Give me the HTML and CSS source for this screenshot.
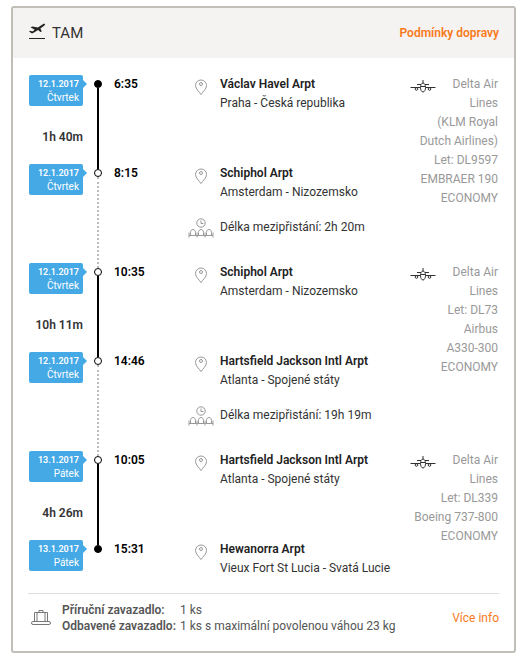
FILE: index.html
```html
<!DOCTYPE html>
<html lang="cs">

<head>
  <meta charset="UTF-8">
  <meta name="viewport" content="width=device-width, initial-scale=1.0">
  <title>TAM</title>
  <link rel="stylesheet" href="styles.css">
</head>

<body>
  <svg class="sprite" width="0" height="0" aria-hidden="true">
    <symbol id="pin" viewBox="0 0 14 17">
      <path d="M7 15.500C5 12.500 1.500 10 1.500 6.500a5.500 5.500 0 0 1 11 0C12.500 10 9 12.500 7 15.500z" />
      <circle cx="7" cy="5" r="1.500" />
    </symbol>
    <symbol id="plane" viewBox="0 0 26 14">
      <path d="M13 1v3M7 5.500h4M15 5.500h4M0.500 8.500h10M15.500 8.500h10" />
      <path d="M13 4c-1.500 0-2.500 2-2.500 4.500S11.500 13 13 13s2.500-2 2.500-4.500S14.500 4 13 4z" />
      <path d="M11 7.500h4" />
      <circle cx="6.500" cy="10" r="1.300" />
      <circle cx="19.500" cy="10" r="1.300" />
    </symbol>
    <symbol id="wait" viewBox="0 0 26 20">
      <circle cx="13" cy="5" r="4.200" />
      <path d="M13 2.500V5.500h2.500" />
      <path d="M1 19.500v-5M9 19.500v-5M17 19.500v-5M25 19.500v-5M1 17.500h24" />
      <path d="M2.500 17.500V14.500c0-4 5-4 5 0v3M10.500 17.500V14.500c0-4 5-4 5 0v3M18.500 17.500V14.500c0-4 5-4 5 0v3" />
    </symbol>
  </svg>

  <section class="card">
    <header class="card-header">
      <svg class="icon-takeoff" width="18" height="18" viewBox="0 0 18 18" aria-hidden="true">
        <path d="M1 16.500h16" />
        <path class="fill" d="M1 9.500l1.300-.8 2 .9 2.500-1.900L2.500 5.300l1.900-.7 5.500 1L14 2.800c1-.8 2.300-1.500 2.900-1s-.2 1.500-1.200 2.200l-3.300 2.600 1.400 2.900-1.400.6-2.300-2-4.500 2.700c-1 .6-1.800.7-2.400.3z" />
      </svg>
      <h1>TAM</h1>
      <a href="#podminky">Podmínky dopravy</a>
    </header>

    <div class="legs">
      <div class="leg">
        <div class="route">
          <div class="when">
            <p class="date"><b>12.1.2017</b><br>Čtvrtek</p>
            <p class="duration">1h 40m</p>
          </div>
          <div class="axis"><i class="dot full"></i><i class="line"></i></div>
          <b class="time">6:35</b>
          <svg class="icon pin" width="14" height="17"><use href="#pin" /></svg>
          <p class="place"><b>Václav Havel Arpt</b><br>Praha - Česká republika</p>

          <div class="when">
            <p class="date"><b>12.1.2017</b><br>Čtvrtek</p>
          </div>
          <div class="axis transfer"><i class="dot"></i><i class="line dotted"></i></div>
          <b class="time">8:15</b>
          <svg class="icon pin" width="14" height="17"><use href="#pin" /></svg>
          <p class="place"><b>Schiphol Arpt</b><br>Amsterdam - Nizozemsko</p>

          <svg class="icon wait" width="26" height="20"><use href="#wait" /></svg>
          <p class="layover">Délka mezipřistání: 2h 20m</p>
        </div>
        <div class="carrier">
          <svg class="plane" width="26" height="14"><use href="#plane" /></svg>
          <p>Delta Air<br>Lines<br>(KLM Royal<br>Dutch Airlines)<br>Let: DL9597<br>EMBRAER 190<br>ECONOMY</p>
        </div>
      </div>

      <div class="leg">
        <div class="route">
          <div class="when">
            <p class="date"><b>12.1.2017</b><br>Čtvrtek</p>
            <p class="duration">10h 11m</p>
          </div>
          <div class="axis"><i class="dot"></i><i class="line"></i></div>
          <b class="time">10:35</b>
          <svg class="icon pin" width="14" height="17"><use href="#pin" /></svg>
          <p class="place"><b>Schiphol Arpt</b><br>Amsterdam - Nizozemsko</p>

          <div class="when">
            <p class="date"><b>12.1.2017</b><br>Čtvrtek</p>
          </div>
          <div class="axis transfer"><i class="dot"></i><i class="line dotted"></i></div>
          <b class="time">14:46</b>
          <svg class="icon pin" width="14" height="17"><use href="#pin" /></svg>
          <p class="place"><b>Hartsfield Jackson Intl Arpt</b><br>Atlanta - Spojené státy</p>

          <svg class="icon wait" width="26" height="20"><use href="#wait" /></svg>
          <p class="layover">Délka mezipřistání: 19h 19m</p>
        </div>
        <div class="carrier">
          <svg class="plane" width="26" height="14"><use href="#plane" /></svg>
          <p>Delta Air<br>Lines<br>Let: DL73<br>Airbus<br>A330-300<br>ECONOMY</p>
        </div>
      </div>

      <div class="leg">
        <div class="route last">
          <div class="when">
            <p class="date"><b>13.1.2017</b><br>Pátek</p>
            <p class="duration">4h 26m</p>
          </div>
          <div class="axis"><i class="dot"></i><i class="line"></i></div>
          <b class="time">10:05</b>
          <svg class="icon pin" width="14" height="17"><use href="#pin" /></svg>
          <p class="place"><b>Hartsfield Jackson Intl Arpt</b><br>Atlanta - Spojené státy</p>

          <div class="when">
            <p class="date"><b>13.1.2017</b><br>Pátek</p>
          </div>
          <div class="axis"><i class="dot full"></i></div>
          <b class="time">15:31</b>
          <svg class="icon pin" width="14" height="17"><use href="#pin" /></svg>
          <p class="place"><b>Hewanorra Arpt</b><br>Vieux Fort St Lucia - Svatá Lucie</p>
        </div>
        <div class="carrier">
          <svg class="plane" width="26" height="14"><use href="#plane" /></svg>
          <p>Delta Air<br>Lines<br>Let: DL339<br>Boeing 737-800<br>ECONOMY</p>
        </div>
      </div>
    </div>

    <footer class="card-footer">
      <svg class="icon-bag" width="20" height="18" viewBox="0 0 20 18" aria-hidden="true">
        <path d="M3.500 12.500v-9h13v9M6 3.500v9M14 3.500v9M8 3.500v-2h4v2" />
        <rect x="0.500" y="12.500" width="19" height="3" rx="1.500" />
      </svg>
      <dl>
        <dt>Příruční zavazadlo:</dt>
        <dd>1 ks</dd>
        <dt>Odbavené zavazadlo:</dt>
        <dd>1 ks s maximální povolenou váhou 23 kg</dd>
      </dl>
      <a href="#info">Více info</a>
    </footer>
  </section>
</body>

</html>
```
FILE: styles.css
```css
* {
  box-sizing: border-box;
}

body {
  margin: 0;
  padding: 6px 7px 7px 11px;
  background-color: #fff;
  font-family: Roboto, "Noto Sans", sans-serif;
  font-size: 12px;
  line-height: 19px;
  color: #333;
}

h1, p, dl, dd {
  margin: 0;
}

b, dt {
  font-weight: 600;
}

a {
  color: #f97a1a;
  text-decoration: none;
}

svg {
  fill: none;
  stroke: #999;
}

.sprite {
  position: absolute;
}

.card {
  border: 2px solid #c0beb6;
  border-radius: 3px;
}

.card-header {
  display: flex;
  align-items: center;
  height: 50px;
  padding: 0 15px;
  background-color: #f5f3f2;
}

.card-header h1 {
  flex: 1;
  margin-left: 6px;
  font-size: 15px;
  font-weight: 400;
}

.card-header a {
  font-weight: 600;
}

.icon-takeoff {
  margin-bottom: 4px;
  stroke: #222;
}

.icon-takeoff .fill {
  fill: #222;
  stroke: none;
}

.legs {
  margin: 0 15px;
  padding: 17px 1px 0;
  border-bottom: 1px solid #ddd;
}

.leg {
  display: flex;
}

.route {
  display: grid;
  flex: 1;
  grid-template-columns: 54px 30px 74px 33px 1fr;
  grid-template-rows: 89px 54px 45px;
}

.route.last {
  grid-template-rows: 89px 53px;
}

.when {
  grid-column: 1;
}

.date {
  position: relative;
  padding: 3px 4px 2px;
  border-radius: 2px;
  background-color: #45a9e6;
  color: #fff;
  font-size: 10px;
  line-height: 13px;
  text-align: right;
}

.date b {
  font-size: 9px;
  vertical-align: top;
}

/* arrow pointing at the timeline */
.date::after {
  content: "";
  position: absolute;
  top: 5px;
  left: 100%;
  border: 4px solid transparent;
  border-left-color: #45a9e6;
  border-right: 0;
}

.duration {
  padding-top: 22px;
  font-weight: 600;
  text-align: right;
}

.axis {
  display: flex;
  flex-direction: column;
  align-items: center;
  grid-column: 2;
  padding-top: 5px;
}

.axis.transfer {
  grid-row: 2 / 4;
}

.dot {
  width: 8px;
  height: 8px;
  border: 1px solid #000;
  border-radius: 50%;
}

.dot.full {
  background-color: #000;
}

.line {
  flex: 1;
  margin-bottom: -5px;
  border-left: 2px solid #000;
}

.line.dotted {
  border-left: 2px dotted #bbb;
}

.time {
  grid-column: 3;
  padding-left: 1px;
  color: #000;
}

.icon {
  grid-column: 4;
}

.pin {
  margin: 4px 0 0 7px;
}

.place, .layover {
  grid-column: 5;
  white-space: nowrap;
}

.place b {
  color: #222;
}

.wait {
  margin-left: 1px;
}

.carrier {
  display: flex;
  width: 88px;
  color: #999;
  text-align: right;
  white-space: nowrap;
}

.carrier p {
  flex: 1;
  margin-left: -26px;
}

.plane {
  flex: none;
  margin-top: 4px;
  stroke: #333;
}

.card-footer {
  display: flex;
  align-items: center;
  padding: 8px 15px 17px 18px;
  color: #555;
  line-height: 16px;
}

.card-footer dl {
  display: grid;
  grid-template-columns: 118px 1fr;
  flex: 1;
  margin-left: 11px;
  white-space: nowrap;
}

.icon-bag {
  stroke: #777;
}
```
